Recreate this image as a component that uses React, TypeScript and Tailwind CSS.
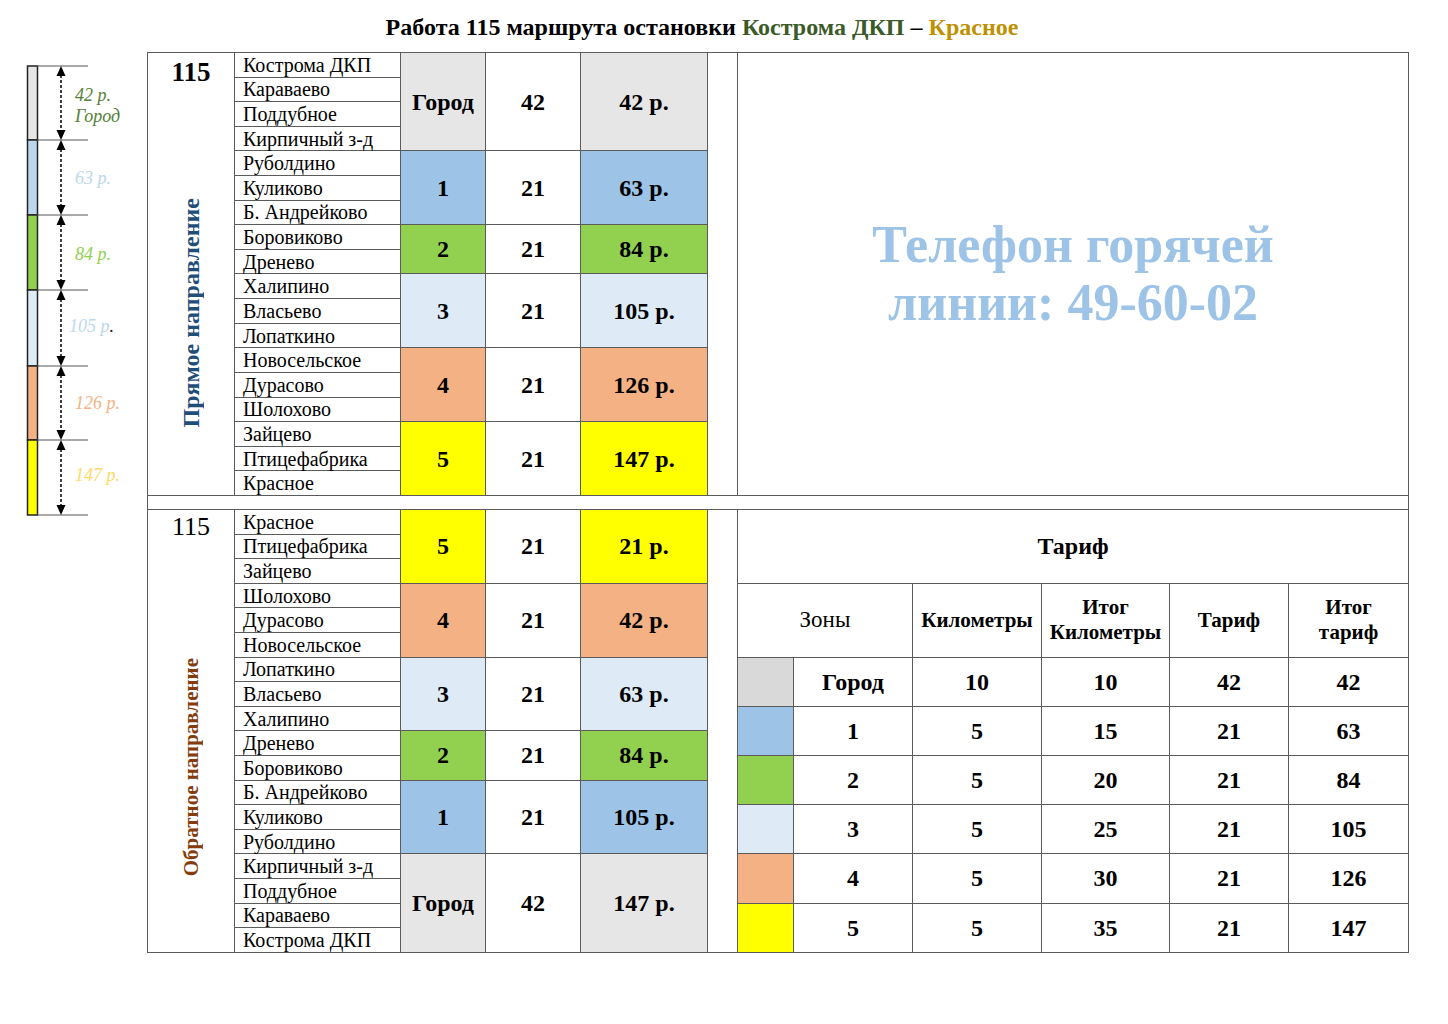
import React from 'react';

type Zone = { label: string; span: number; km: string; price: string; bg: string };

const stopsForward = [
  'Кострома ДКП',
  'Караваево',
  'Поддубное',
  'Кирпичный з-д',
  'Руболдино',
  'Куликово',
  'Б. Андрейково',
  'Боровиково',
  'Дренево',
  'Халипино',
  'Власьево',
  'Лопаткино',
  'Новосельское',
  'Дурасово',
  'Шолохово',
  'Зайцево',
  'Птицефабрика',
  'Красное',
];
const stopsBack = [...stopsForward].reverse();

const zonesForward: Zone[] = [
  { label: 'Город', span: 4, km: '42', price: '42 р.', bg: 'bg-[#e7e6e6]' },
  { label: '1', span: 3, km: '21', price: '63 р.', bg: 'bg-[#9dc3e6]' },
  { label: '2', span: 2, km: '21', price: '84 р.', bg: 'bg-[#92d050]' },
  { label: '3', span: 3, km: '21', price: '105 р.', bg: 'bg-[#deebf7]' },
  { label: '4', span: 3, km: '21', price: '126 р.', bg: 'bg-[#f4b183]' },
  { label: '5', span: 3, km: '21', price: '147 р.', bg: 'bg-[#ffff00]' },
];

const zonesBack: Zone[] = [
  { label: '5', span: 3, km: '21', price: '21 р.', bg: 'bg-[#ffff00]' },
  { label: '4', span: 3, km: '21', price: '42 р.', bg: 'bg-[#f4b183]' },
  { label: '3', span: 3, km: '21', price: '63 р.', bg: 'bg-[#deebf7]' },
  { label: '2', span: 2, km: '21', price: '84 р.', bg: 'bg-[#92d050]' },
  { label: '1', span: 3, km: '21', price: '105 р.', bg: 'bg-[#9dc3e6]' },
  { label: 'Город', span: 4, km: '42', price: '147 р.', bg: 'bg-[#e7e6e6]' },
];

const tariffs = [
  { zone: 'Город', km: '10', total: '10', rate: '42', sum: '42', bg: 'bg-[#d9d9d9]' },
  { zone: '1', km: '5', total: '15', rate: '21', sum: '63', bg: 'bg-[#9dc3e6]' },
  { zone: '2', km: '5', total: '20', rate: '21', sum: '84', bg: 'bg-[#92d050]' },
  { zone: '3', km: '5', total: '25', rate: '21', sum: '105', bg: 'bg-[#deebf7]' },
  { zone: '4', km: '5', total: '30', rate: '21', sum: '126', bg: 'bg-[#f4b183]' },
  { zone: '5', km: '5', total: '35', rate: '21', sum: '147', bg: 'bg-[#ffff00]' },
];

const cell = 'border border-[#5b5b5b]';

// start row index -> zone
function zoneStarts(zones: Zone[]) {
  const map: Record<number, Zone> = {};
  let i = 0;
  zones.forEach((z) => {
    map[i] = z;
    i += z.span;
  });
  return map;
}

function Ruler() {
  const ticks = [14, 88, 163, 238, 314, 388, 463];
  const fills = ['#e7e6e6', '#bdd7ee', '#92d050', '#deebf7', '#f4b183', '#ffff00'];
  return (
    <svg width="120" height="480" className="ml-[20px] shrink-0">
      {fills.map((f, i) => (
        <rect key={i} x="7.5" y={ticks[i]} width="10" height={ticks[i + 1] - ticks[i]} fill={f} stroke="#222" strokeWidth="1.5" />
      ))}
      {ticks.map((t, i) => (
        <line key={i} x1="17" x2="68" y1={t} y2={t} stroke="#555" strokeWidth="1" />
      ))}
      {ticks.slice(0, -1).map((t, i) => {
        const b = ticks[i + 1];
        return (
          <g key={i}>
            <line x1="41" x2="41" y1={t + 9} y2={b - 9} stroke="#000" strokeWidth="1.5" strokeDasharray="3 2" />
            <polygon points={`41,${t} 36.5,${t + 10} 45.5,${t + 10}`} fill="#000" />
            <polygon points={`41,${b} 36.5,${b - 10} 45.5,${b - 10}`} fill="#000" />
          </g>
        );
      })}
      <g fontFamily="'Liberation Serif', serif" fontStyle="italic" fontSize="18">
        <text x="55" y="49" fill="#548235">42 р.</text>
        <text x="55" y="70" fill="#548235">Город</text>
        <text x="55" y="132" fill="#bdd7ee">63 р.</text>
        <text x="55" y="208" fill="#92d050">84 р.</text>
        <text x="49" y="280" fill="#bdd7ee">105 р<tspan fill="#222">.</tspan></text>
        <text x="55" y="357" fill="#f4b183">126 р.</text>
        <text x="55" y="429" fill="#ffd966">147 р.</text>
      </g>
    </svg>
  );
}

function ZoneCells({ z }: { z: Zone }) {
  return (
    <>
      <td rowSpan={z.span} className={`${cell} ${z.bg} text-center font-bold text-[24px]`}>{z.label}</td>
      <td rowSpan={z.span} className={`${cell} text-center font-bold text-[24px]`}>{z.km}</td>
      <td rowSpan={z.span} className={`${cell} ${z.bg} text-center font-bold text-[24px]`}>{z.price}</td>
    </>
  );
}

export default function App() {
  const fwd = zoneStarts(zonesForward);
  const back = zoneStarts(zonesBack);

  return (
    <div className="w-[1448px] h-[1024px] bg-white font-['Liberation_Serif',serif] text-black">
      {/* Title */}
      <div className="flex justify-center pr-[44px] pt-[13px] h-[52px]">
        <h1 className="text-[24px] font-bold leading-[28px]">
          Работа 115 маршрута остановки <span className="text-[#3a5a28]">Кострома ДКП</span> –{' '}
          <span className="text-[#bf9000]">Красное</span>
        </h1>
      </div>

      <div className="flex">
        <div className="w-[147px] shrink-0">
          <Ruler />
        </div>

        <table className="border-collapse table-fixed w-[1261px] border border-[#444]">
          <colgroup>
            <col className="w-[87px]" />
            <col className="w-[166px]" />
            <col className="w-[85px]" />
            <col className="w-[95px]" />
            <col className="w-[127px]" />
            <col className="w-[30px]" />
            <col className="w-[56px]" />
            <col className="w-[119px]" />
            <col className="w-[129px]" />
            <col className="w-[128px]" />
            <col className="w-[119px]" />
            <col className="w-[120px]" />
          </colgroup>
          <tbody>
            {/* Forward direction */}
            {stopsForward.map((s, i) => (
              <tr key={'f' + i} className="h-[24.6px]">
                {i === 0 && (
                  <td rowSpan={18} className={`${cell} align-top p-0`}>
                    <div className="flex flex-col items-center h-[442px]">
                      <div className="text-[27px] font-bold leading-none pt-[6px]">115</div>
                      <div className="flex-1 flex items-center justify-center pt-[44px]">
                        <span className="[writing-mode:vertical-rl] rotate-180 font-bold text-[24px] text-[#1f4e79] leading-none whitespace-nowrap">
                          Прямое направление
                        </span>
                      </div>
                    </div>
                  </td>
                )}
                <td className={`${cell} text-[20px] leading-none pl-[8px] whitespace-nowrap`}>{s}</td>
                {fwd[i] && <ZoneCells z={fwd[i]} />}
                {i === 0 && (
                  <>
                    <td rowSpan={18} className={cell}></td>
                    <td rowSpan={18} colSpan={6} className={`${cell} text-center align-middle`}>
                      <div className="text-[52px] font-bold leading-[58px] text-[#9dc3e6]">
                        Телефон горячей
                        <br />
                        линии: 49-60-02
                      </div>
                    </td>
                  </>
                )}
              </tr>
            ))}

            {/* Separator */}
            <tr className="h-[14px]">
              <td colSpan={12} className={cell}></td>
            </tr>

            {/* Reverse direction */}
            {stopsBack.map((s, i) => (
              <tr key={'b' + i} className="h-[24.6px]">
                {i === 0 && (
                  <td rowSpan={18} className={`${cell} align-top p-0`}>
                    <div className="flex flex-col items-center h-[440px]">
                      <div className="text-[26px] leading-none pt-[4px]">115</div>
                      <div className="flex-1 flex items-center justify-center pt-[44px]">
                        <span className="[writing-mode:vertical-rl] rotate-180 font-bold text-[21px] text-[#843c0c] leading-none whitespace-nowrap">
                          Обратное направление
                        </span>
                      </div>
                    </div>
                  </td>
                )}
                <td className={`${cell} text-[20px] leading-none pl-[8px] whitespace-nowrap`}>{s}</td>
                {back[i] && <ZoneCells z={back[i]} />}
                {i === 0 && (
                  <>
                    <td rowSpan={18} className={cell}></td>
                    <td rowSpan={3} colSpan={6} className={`${cell} text-center font-bold text-[24px]`}>
                      Тариф
                    </td>
                  </>
                )}
                {i === 3 && (
                  <>
                    <td rowSpan={3} colSpan={2} className={`${cell} text-center text-[23px]`}>Зоны</td>
                    <td rowSpan={3} className={`${cell} text-center font-bold text-[21px] leading-[25px]`}>Километры</td>
                    <td rowSpan={3} className={`${cell} text-center font-bold text-[21px] leading-[25px]`}>
                      Итог
                      <br />
                      Километры
                    </td>
                    <td rowSpan={3} className={`${cell} text-center font-bold text-[21px] leading-[25px]`}>Тариф</td>
                    <td rowSpan={3} className={`${cell} text-center font-bold text-[21px] leading-[25px]`}>
                      Итог
                      <br />
                      тариф
                    </td>
                  </>
                )}
                {i >= 6 && (i - 6) % 2 === 0 && (() => {
                  const t = tariffs[(i - 6) / 2];
                  return (
                    <>
                      <td rowSpan={2} className={`${cell} ${t.bg}`}></td>
                      <td rowSpan={2} className={`${cell} text-center font-bold text-[24px]`}>{t.zone}</td>
                      <td rowSpan={2} className={`${cell} text-center font-bold text-[24px]`}>{t.km}</td>
                      <td rowSpan={2} className={`${cell} text-center font-bold text-[24px]`}>{t.total}</td>
                      <td rowSpan={2} className={`${cell} text-center font-bold text-[24px]`}>{t.rate}</td>
                      <td rowSpan={2} className={`${cell} text-center font-bold text-[24px]`}>{t.sum}</td>
                    </>
                  );
                })()}
              </tr>
            ))}
          </tbody>
        </table>
      </div>
    </div>
  );
}
